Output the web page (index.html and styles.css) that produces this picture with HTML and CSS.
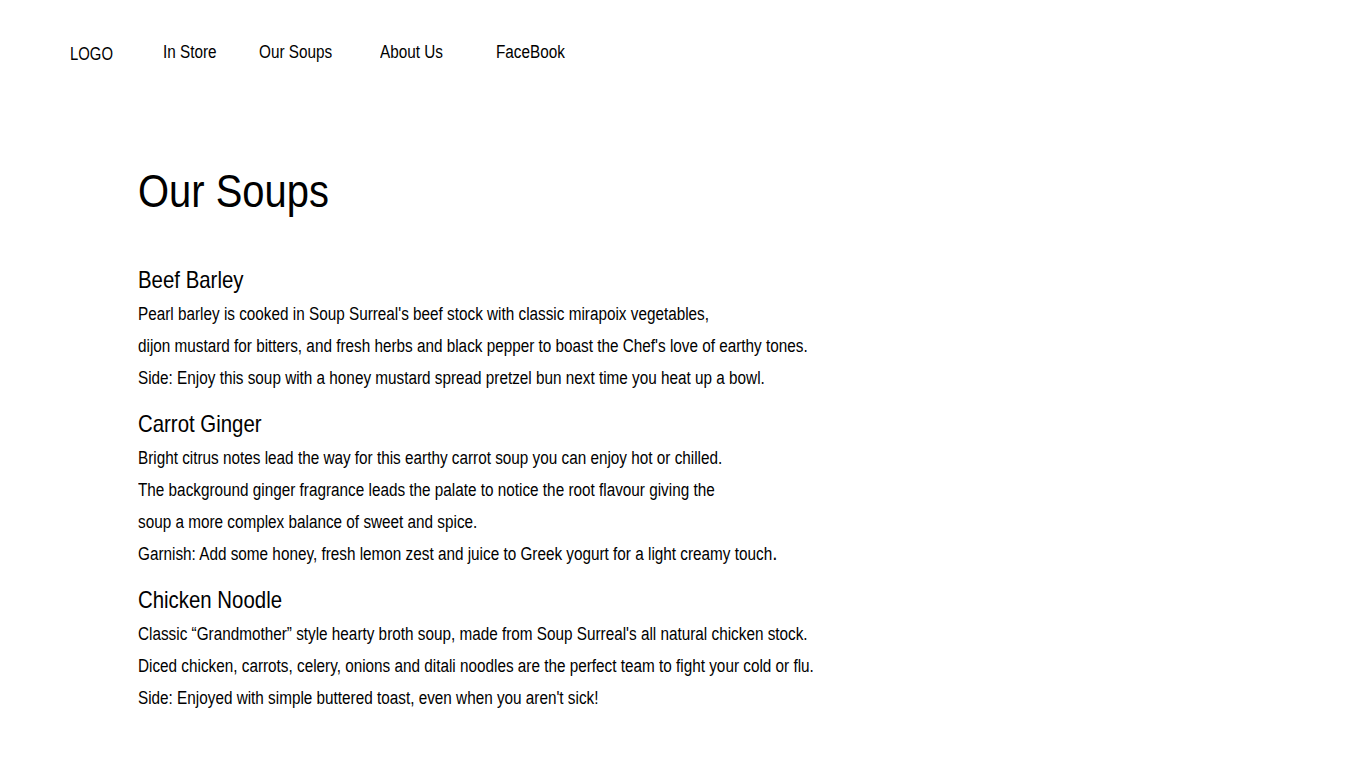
FILE: index.html
```html
<!DOCTYPE html>
<html lang="en">
<head>
<meta charset="utf-8">
<title>Our Soups</title>
<link rel="stylesheet" href="styles.css">
</head>
<body>
<header class="nav">
  <span class="logo">LOGO</span>
  <a class="nav-link" href="#">In Store</a>
  <a class="nav-link" href="#">Our Soups</a>
  <a class="nav-link" href="#">About Us</a>
  <a class="nav-link" href="#">FaceBook</a>
</header>
<main class="content">
  <h1 class="title">Our Soups</h1>
  <section class="soup">
    <h2 class="soup-name">Beef Barley</h2>
    <p class="line">Pearl barley is cooked in Soup Surreal's beef stock with classic mirapoix vegetables,</p>
    <p class="line">dijon mustard for bitters, and fresh herbs and black pepper to boast the Chef's love of earthy tones.</p>
    <p class="line">Side: Enjoy this soup with a honey mustard spread pretzel bun next time you heat up a bowl.</p>
  </section>
  <section class="soup">
    <h2 class="soup-name">Carrot Ginger</h2>
    <p class="line">Bright citrus notes lead the way for this earthy carrot soup you can enjoy hot or chilled.</p>
    <p class="line">The background ginger fragrance leads the palate to notice the root flavour giving the</p>
    <p class="line">soup a more complex balance of sweet and spice.</p>
    <p class="line">Garnish: Add some honey, fresh lemon zest and juice to Greek yogurt for a light creamy touch<span class="big-dot">.</span></p>
  </section>
  <section class="soup">
    <h2 class="soup-name">Chicken Noodle</h2>
    <p class="line">Classic “Grandmother” style hearty broth soup, made from Soup Surreal's all natural chicken stock.</p>
    <p class="line">Diced chicken, carrots, celery, onions and ditali noodles are the perfect team to fight your cold or flu.</p>
    <p class="line">Side: Enjoyed with simple buttered toast, even when you aren't sick!</p>
  </section>
</main>
</body>
</html>
```
FILE: styles.css
```css
* { box-sizing: border-box; }
html, body { margin: 0; padding: 0; background: #fff; }
body {
  font-family: "Liberation Sans", Arial, sans-serif;
  color: #000;
}
/* condensed look: Arial-metric text squeezed horizontally */
.logo, .nav-link, .title, .soup-name, .line {
  transform: scaleX(0.85);
  transform-origin: left center;
}
.nav {
  display: grid;
  grid-template-columns: 93px 96px 121px 116px auto;
  align-items: baseline;
  padding: 42px 0 0 70px;
  height: 92px;
}
.logo {
  font-size: 17.5px;
  position: relative;
  top: 2px;
}
.nav-link {
  font-size: 18px;
  color: #000;
  text-decoration: none;
}
.content {
  padding: 71px 0 0 138px;
}
.title {
  font-size: 47px;
  font-weight: normal;
  margin: 0 0 49px;
  line-height: 56px;
}
.soup { margin-bottom: 18px; }
.soup-name {
  font-size: 24px;
  font-weight: normal;
  margin: 0 0 6px;
  line-height: 24px;
}
.line {
  font-size: 18px;
  line-height: 32px;
  margin: 0;
}
.big-dot { font-size: 22px; line-height: 0; }
```
